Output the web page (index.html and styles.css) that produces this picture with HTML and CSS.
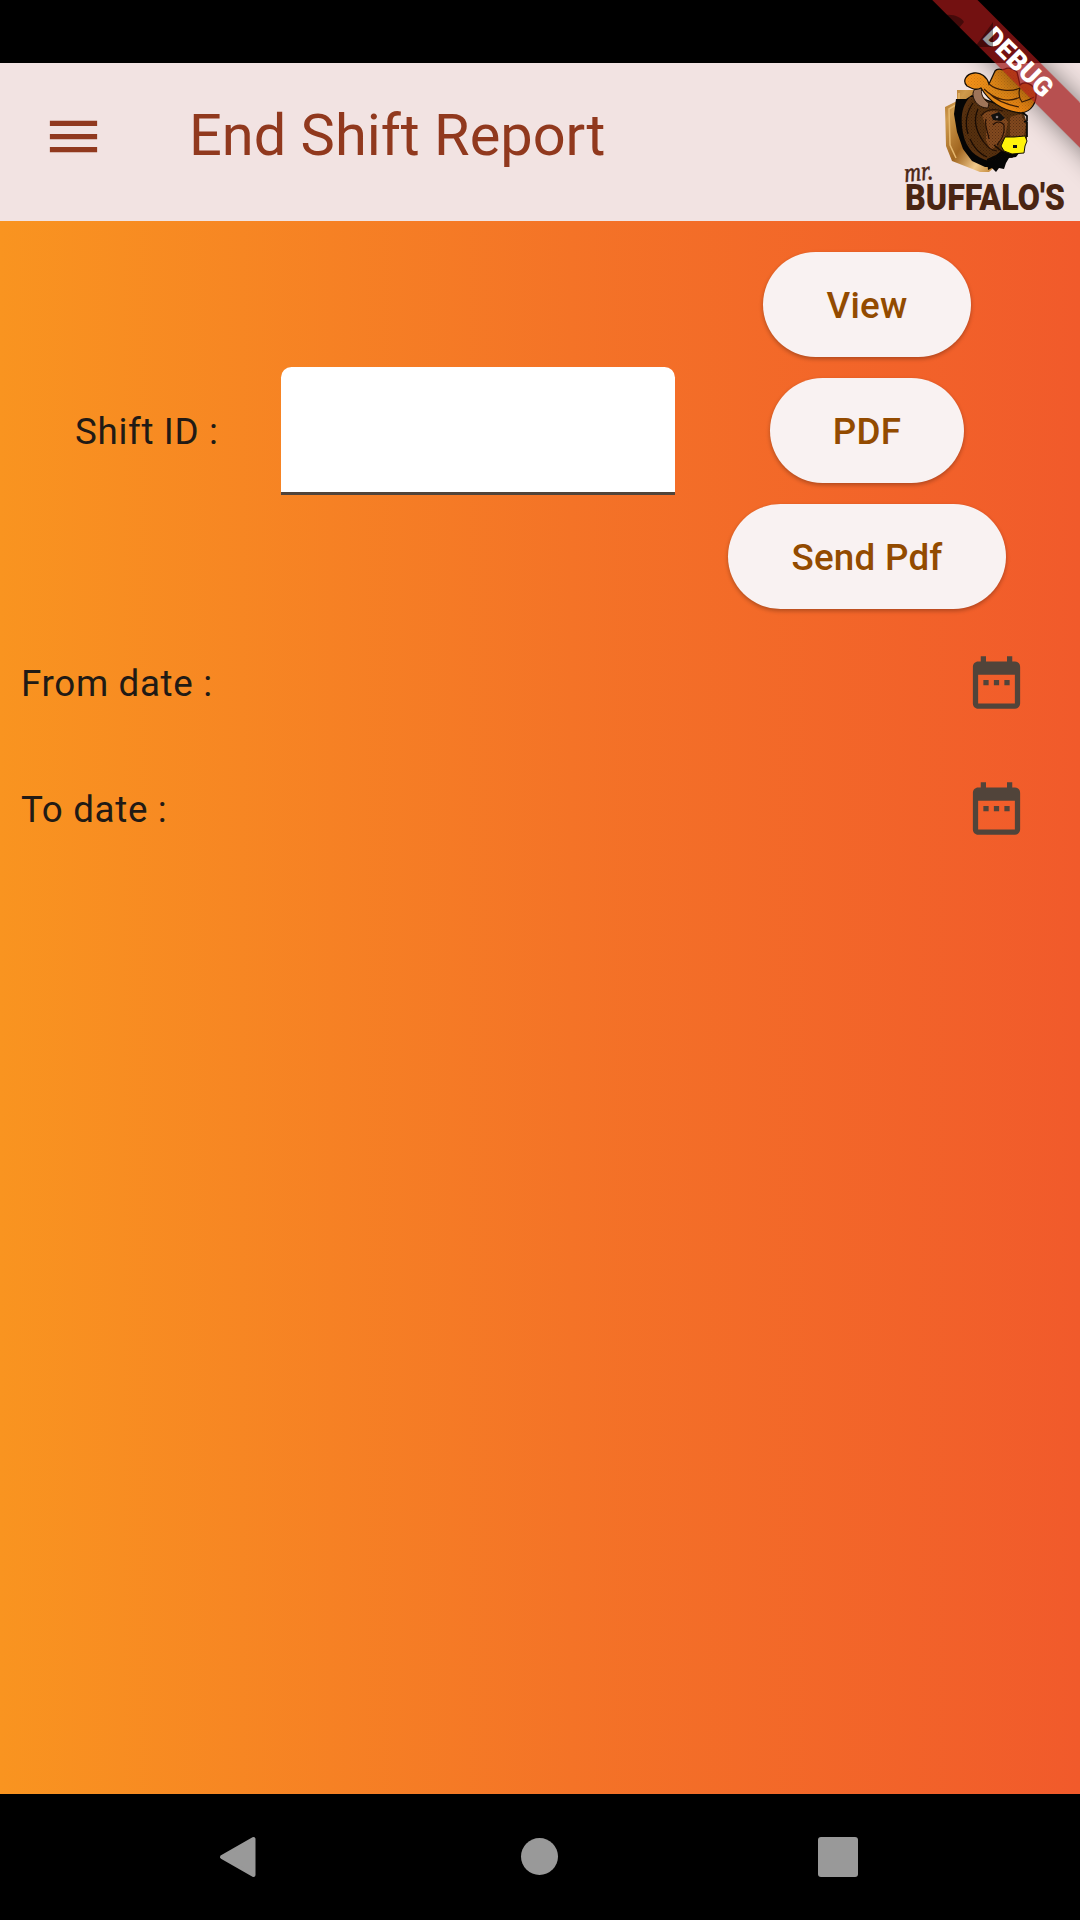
FILE: index.html
```html
<!DOCTYPE html>
<html lang="en">
<head>
<meta charset="utf-8">
<title>End Shift Report</title>
<link rel="stylesheet" href="styles.css">
</head>
<body>
<div class="screen">
  <div class="status-bar"></div>
  <header class="app-bar">
    <svg class="icon menu" viewBox="0 0 24 24"><path d="M3 18h18v-2H3v2zm0-5h18v-2H3v2zm0-7v2h18V6H3z"/></svg>
    <h1 class="title">End Shift Report</h1>
    <svg class="logo" viewBox="0 0 190 157">
      <defs>
        <linearGradient id="wood" x1="0" y1="0" x2="1" y2="1">
          <stop offset="0" stop-color="#a86c24"/><stop offset=".2" stop-color="#cf9a4c"/><stop offset=".5" stop-color="#a0651f"/><stop offset=".75" stop-color="#f0c88a"/><stop offset="1" stop-color="#b5741f"/>
        </linearGradient>
        <linearGradient id="hat" x1="0" y1="0" x2="1" y2="1">
          <stop offset="0" stop-color="#ff9518"/><stop offset=".5" stop-color="#e08818"/><stop offset="1" stop-color="#fb8c12"/>
        </linearGradient>
        <pattern id="grain" width="3" height="3" patternUnits="userSpaceOnUse"><path d="M0 0h1v1H0zM1.500 1.500h1v1h-1z" fill="#1c0c00" opacity=".4"/></pattern>
      </defs>
      <path d="M67 27H85L101 40 108 101 99 109 90 109 62 98 56 83 55 44 67 38Z" fill="url(#wood)"/>
      <path d="M69 30V40L59 46 60 82 66 95" fill="none" stroke="#e5b76e" stroke-width="1.500"/>
      <path d="M76 36 82 32 108 40 105 104 95 104 82 98 73 86 67 69 64 51 66 36Z" fill="#050505"/>
      <path d="M80 34C72 42 70 55 73 70 76 86 86 95 99 98L110 93 122 95 131 88 137 76 137 60 133 48 115 45 87 34Z" fill="#57300f"/>
      <path d="M92 52c6-5 15-5 20-1l6 8-3 14-6 8-8 6-5-9 0-14zM120 54l11-3 5 10-2 12-14 1z" fill="#83491f"/>
      <path d="M83 40c-7 10-8 21-5 31M88 46c-5 11-2 22 5 32M80 76c4 9 10 15 17 18M104 82c4 4 9 7 13 9" fill="none" stroke="#180b04" stroke-width="1.300"/>
      <path d="M91 53c4-6 12-8 22-5M96 56c-2 7 2 12 3 20M103 62c3-4 8-4 11 0 1 9-2 14-7 20M92 77c5 6 7 10 15 11" fill="none" stroke="#241006" stroke-width="1.200"/>
      <path d="M97 96l9-4 5-4 10 3 9-2-4 5-7 1-3 5-2 6-5-1-3 4-4-4-4 2z" fill="#050505"/>
      <path d="M132 49l5 4v5l-3 1M137 59v15" fill="none" stroke="#080808" stroke-width="1.700"/>
      <path d="M101 52l8-3 6 6-4 3-8-1z" fill="#111"/><circle cx="107" cy="54" r="1.300" fill="#8d8180"/>
      <path d="M82 34 133 48 137 60 137 76 122 95 99 98 76 82 70 60Z" fill="url(#grain)"/>
      <path d="M87 25c-5 2-5 8-2 13 3 5 8 7 13 7l1-5c-6-3-9-10-7-16z" fill="#9e7459" stroke="#24140b"/>
      <path d="M91 25C85 28 81 25 77 23 72 18 76 11 84 10 91 9 97 14 99 21L105 8C108 4 112 8 115 6 118 4 123 6 127 9L130 22C134 18 143 20 146 29 147 40 141 49 131 50 112 48 99 38 91 25Z" fill="url(#hat)" stroke="#181008" stroke-width="1.300"/>
      <path d="M99 21c8 7 22 8 31 4M94 26c11 11 25 14 36 8M130 25c-2 6-1 10 2 14 4-1 9-3 12-5M99 30c8 9 20 12 30 14" fill="none" stroke="#432006" stroke-width="1.200"/>
      <path d="M91 25 77 23V13L84 10 99 21 105 8 127 9 130 22 146 29 141 47 131 50Z" fill="url(#grain)" opacity=".35"/>
      <path d="M115 74 124 74 135 73 137 78 135 83 134 90 122 91 114 88 111 83Z" fill="#fff20b" stroke="#141005" stroke-width="1"/>
      <path d="M123 82h4v3h-4z" fill="#111"/>
      <text class="logo-mr" x="15" y="119" transform="rotate(-6 15 119)" textLength="29" lengthAdjust="spacingAndGlyphs">mr.</text>
      <text class="logo-name" x="15" y="147" textLength="160" lengthAdjust="spacingAndGlyphs">BUFFALO'S</text>
    </svg>
  </header>
  <main class="content">
    <section class="shift-row">
      <label class="shift-label" for="shift">Shift ID :</label>
      <input class="shift-input" id="shift" type="text">
      <div class="actions">
        <button class="button">View</button>
        <button class="button">PDF</button>
        <button class="button">Send Pdf</button>
      </div>
    </section>
    <section class="date-row"><span class="date-label">From date :</span>
      <svg class="icon" viewBox="0 0 24 24"><path d="M9 11H7v2h2v-2zm4 0h-2v2h2v-2zm4 0h-2v2h2v-2zm2-7h-1V2h-2v2H8V2H6v2H5c-1.110 0-1.990.9-1.990 2L3 20c0 1.100.89 2 2 2h14c1.100 0 2-.9 2-2V6c0-1.100-.9-2-2-2zm0 16H5V9h14v11z"/></svg>
    </section>
    <section class="date-row"><span class="date-label">To date :</span>
      <svg class="icon" viewBox="0 0 24 24"><path d="M9 11H7v2h2v-2zm4 0h-2v2h2v-2zm4 0h-2v2h2v-2zm2-7h-1V2h-2v2H8V2H6v2H5c-1.110 0-1.990.9-1.990 2L3 20c0 1.100.89 2 2 2h14c1.100 0 2-.9 2-2V6c0-1.100-.9-2-2-2zm0 16H5V9h14v11z"/></svg>
    </section>
  </main>
  <nav class="nav-bar">
    <svg class="nav-icon" viewBox="0 0 44 44"><path class="back" d="M5 22 36.500 4V40Z"/></svg>
    <svg class="nav-icon" viewBox="0 0 44 44"><circle cx="22.500" cy="21.500" r="18.500"/></svg>
    <svg class="nav-icon" viewBox="0 0 44 44"><rect x="2" y="2" width="40" height="40" rx="3"/></svg>
  </nav>
  <div class="banner">DEBUG</div>
  <svg class="status-icons" viewBox="0 0 240 70"><path d="M106 15c8-1 16 3 18 7l-5 6zM153 22V47H135Z"/></svg>
</div>
</body>
</html>
```

FILE: styles.css
```css
* { box-sizing: border-box; }
body { margin: 0; font-family: Roboto, sans-serif; }
.screen { position: relative; display: flex; flex-direction: column; width: 1080px; height: 1920px; overflow: hidden; }
.status-bar { height: 63px; background: #000; }
.app-bar { display: flex; align-items: center; height: 157.5px; padding-left: 42px; background: #f2e3e2; color: #91391e; }
.icon { display: block; width: 63px; height: 63px; fill: #51443a; }
.menu { fill: #91391e; margin-top: -10px; }
.title { margin: -14px auto 0 84px; font-size: 57.75px; line-height: 74px; font-weight: 400; white-space: nowrap; }
.logo { width: 190px; height: 157px; overflow: visible; }
.logo-mr { font: italic 400 27px "Liberation Serif", serif; fill: #4a2513; stroke: #4a2513; stroke-width: .5px; }
.logo-name { font: 900 37.5px Roboto, sans-serif; fill: #4a2513; }
.content { flex: 1; padding-top: 21px; background: linear-gradient(90deg, #f99420, #f47327 53%, #f15a2b); color: #211a15; font-size: 36.75px; letter-spacing: .66px; }
.shift-row { display: flex; align-items: center; height: 378px; }
.shift-label { width: 281px; padding: 2px 0 0 75px; }
.shift-input { width: 394px; height: 127.5px; margin-top: 1px; border: 0; border-bottom: 3px solid #51443a; border-radius: 10.5px 10.5px 0 0; background: #fff; outline: 0; }
.actions { display: flex; flex: 1; flex-direction: column; align-items: center; gap: 21px; padding-right: 21px; }
.button { height: 105px; padding: 2px 63px 0; border: 0; border-radius: 53px; background: #f9f2f2; color: #934b00; font: 500 36.75px Roboto, sans-serif; letter-spacing: .26px; box-shadow: 0 2px 4px rgb(0 0 0 / 28%); }
.date-row { display: flex; align-items: center; justify-content: space-between; height: 126px; padding: 0 52.5px 0 21px; }
.date-label { padding-top: 2px; }
.nav-bar { display: flex; justify-content: space-between; align-items: center; height: 126px; padding: 0 220px 0 217px; background: #000; }
.nav-icon { width: 44px; height: 44px; fill: #999; }
.back { stroke: #999; stroke-width: 4; stroke-linejoin: round; }
.banner { position: absolute; left: 868px; top: 47px; width: 300px; height: 31.5px; transform: rotate(45deg); background: rgb(160 24 24 / 72%); box-shadow: 0 0 26px rgb(0 0 0 / 48%); color: #fff; font-size: 26.8px; line-height: 31.5px; font-weight: 900; text-align: center; }
.status-icons { position: absolute; right: 0; top: 0; width: 240px; height: 70px; fill: rgb(0 0 0 / 40%); }
```
